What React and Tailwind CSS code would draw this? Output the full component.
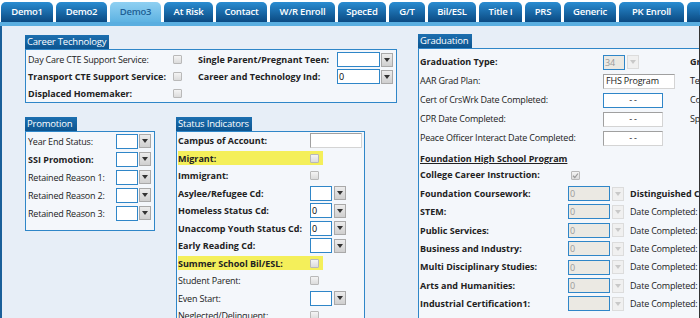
import React from 'react';

const B = 'font-bold tracking-normal';

const tabs = [
    { name: 'Demo1', w: 'w-[52px]' },
    { name: 'Demo2', w: 'w-[51px]' },
    { name: 'Demo3', w: 'w-[51px]', active: true },
    { name: 'At Risk', w: 'w-[49px]' },
    { name: 'Contact', w: 'w-[51px]' },
    { name: 'W/R Enroll', w: 'w-[65px]' },
    { name: 'SpecEd', w: 'w-[48px]' },
    { name: 'G/T', w: 'w-[36px]' },
    { name: 'Bil/ESL', w: 'w-[48px]' },
    { name: 'Title I', w: 'w-[43px]' },
    { name: 'PRS', w: 'w-[36px]' },
    { name: 'Generic', w: 'w-[52px]' },
    { name: 'PK Enroll', w: 'w-[65px]' },
    { name: 'ELL', w: 'w-[40px]' },
];

const Checkbox = ({ checked }) => (
    <div className="flex h-[9px] w-[9px] shrink-0 items-center justify-center rounded-[1px] border border-[#b9b9b9] bg-gradient-to-b from-[#f4f4f4] to-[#dcdcdc]">
        {checked && (
            <svg width="7" height="7" viewBox="0 0 7 7">
                <path d="M1 3.8 L2.8 5.5 L6 1.5" stroke="#9a9a9a" strokeWidth="1.2" fill="none" />
            </svg>
        )}
    </div>
);

const Arrow = ({ disabled }) => (
    <div className={`flex h-[14px] w-[12px] shrink-0 items-center justify-center border ${disabled ? 'border-[#dcdcdc] bg-[#f0f0f0]' : 'border-[#a9a9a9] bg-gradient-to-b from-[#ececec] to-[#cfcfcf]'}`}>
        <svg width="6" height="4" viewBox="0 0 6 4">
            <path d="M0 0 L6 0 L3 4 Z" fill={disabled ? '#c8c8c8' : '#333'} />
        </svg>
    </div>
);

// combobox: text box + arrow
const Select = ({ box = 'w-[22px]', value = '', disabled, gap = 'gap-[1px]' }) => (
    <div className={`flex shrink-0 items-center ${gap}`}>
        <div className={`flex h-[15px] ${box} items-center border border-[#2f86c8] pl-[1px] text-[9px] leading-none ${disabled ? 'bg-[#ebe9e3] text-[#9a9a9a]' : 'bg-white text-black'}`}>
            {value}
        </div>
        <Arrow disabled={disabled} />
    </div>
);

const DateBox = ({ focus }) => (
    <div className={`flex h-[15px] w-[60px] items-center justify-center border bg-white text-[9px] ${focus ? 'border-[#2f86c8]' : 'border-[#a0a0a0] border-r-[#d4d4d4] border-b-[#d4d4d4]'}`}>
        - -
    </div>
);

const Legend = ({ title, w }) => (
    <div className={`flex h-[14px] ${w} items-center whitespace-nowrap bg-gradient-to-b from-[#1c6fb0] to-[#0d5590] pl-[2px] text-[9.5px] leading-none tracking-[-0.2px] text-white`}>
        {title}
    </div>
);

const Row = ({ h, label, bold, labelW, children, hl }) => (
    <div className={`flex ${h} items-center`}>
        <div className={`flex h-[14px] items-center ${hl ? 'bg-[#f4ef5a]' : ''}`}>
            <div className={`${labelW} shrink-0 whitespace-nowrap leading-none ${bold ? B : ''}`}>{label}</div>
            {children}
            {hl && <div className="w-[4px]" />}
        </div>
    </div>
);

const CareerTechnology = () => (
    <div>
        <Legend title="Career Technology" w="w-[84px]" />
        <div className="h-[54px] w-[372px] border border-[#2f86c8] bg-[#f4f7fb] pl-[2px] pt-[1px]">
            <div className="flex h-[17px] items-center">
                <div className="w-[145px] shrink-0 whitespace-nowrap">Day Care CTE Support Service:</div>
                <Checkbox />
                <div className={`ml-[16px] w-[139px] shrink-0 whitespace-nowrap ${B}`}>Single Parent/Pregnant Teen:</div>
                <Select box="w-[43px]" />
            </div>
            <div className="flex h-[17px] items-center">
                <div className={`w-[145px] shrink-0 whitespace-nowrap ${B}`}>Transport CTE Support Service:</div>
                <Checkbox />
                <div className={`ml-[16px] w-[139px] shrink-0 whitespace-nowrap ${B}`}>Career and Technology Ind:</div>
                <Select box="w-[43px]" value="0" />
            </div>
            <div className="flex h-[17px] items-center">
                <div className={`w-[145px] shrink-0 whitespace-nowrap ${B}`}>Displaced Homemaker:</div>
                <Checkbox />
            </div>
        </div>
    </div>
);

const Promotion = () => {
    const rows = [
        { label: 'Year End Status:' },
        { label: 'SSI Promotion:', bold: true },
        { label: 'Retained Reason 1:' },
        { label: 'Retained Reason 2:' },
        { label: 'Retained Reason 3:' },
    ];
    return (
        <div>
            <Legend title="Promotion" w="w-[52px]" />
            <div className="h-[100px] w-[130px] border border-[#2f86c8] bg-[#f4f7fb] pl-[2px]">
                {rows.map((r) => (
                    <Row key={r.label} h="h-[18px]" label={r.label} bold={r.bold} labelW="w-[88px]">
                        <Select />
                    </Row>
                ))}
            </div>
        </div>
    );
};

const StatusIndicators = () => {
    const rows = [
        { label: 'Campus of Account:', bold: true, ctl: 'text' },
        { label: 'Migrant:', bold: true, ctl: 'check', hl: true },
        { label: 'Immigrant:', bold: true, ctl: 'check' },
        { label: 'Asylee/Refugee Cd:', bold: true, ctl: 'select' },
        { label: 'Homeless Status Cd:', bold: true, ctl: 'select', value: '0' },
        { label: 'Unaccomp Youth Status Cd:', bold: true, ctl: 'select', value: '0' },
        { label: 'Early Reading Cd:', bold: true, ctl: 'select' },
        { label: 'Summer School Bil/ESL:', bold: true, ctl: 'check', hl: true },
        { label: 'Student Parent:', ctl: 'check' },
        { label: 'Even Start:', ctl: 'select' },
        { label: 'Neglected/Delinquent:', ctl: 'check' },
    ];
    return (
        <div>
            <Legend title="Status Indicators" w="w-[76px]" />
            <div className="h-[200px] w-[189px] border border-[#2f86c8] bg-[#f4f7fb] pl-[1px]">
                {rows.map((r) => (
                    <Row key={r.label} h="h-[17.5px]" label={r.label} bold={r.bold} labelW="w-[132px]" hl={r.hl}>
                        {r.ctl === 'text' && <div className="h-[15px] w-[52px] border border-[#a0a0a0] border-r-[#d4d4d4] border-b-[#d4d4d4] bg-white" />}
                        {r.ctl === 'check' && <Checkbox />}
                        {r.ctl === 'select' && <Select value={r.value} gap="gap-[2px]" />}
                    </Row>
                ))}
            </div>
        </div>
    );
};

const Graduation = () => {
    const top = [
        { label: 'Graduation Type:', bold: true, side: 'Grad Type Code', sideBold: true },
        { label: 'AAR Grad Plan:', side: 'Testing' },
        { label: 'Cert of CrsWrk Date Completed:', side: 'Code' },
        { label: 'CPR Date Completed:', side: 'Speech' },
        { label: 'Peace Officer Interact Date Completed:' },
    ];
    const fhsp = [
        { label: 'Foundation Coursework:', value: '0', side: 'Distinguished Completed', sideBold: true },
        { label: 'STEM:', value: '0', side: 'Date Completed:' },
        { label: 'Public Services:', value: '0', side: 'Date Completed:' },
        { label: 'Business and Industry:', value: '0', side: 'Date Completed:' },
        { label: 'Multi Disciplinary Studies:', value: '0', side: 'Date Completed:' },
        { label: 'Arts and Humanities:', value: '0', side: 'Date Completed:' },
        { label: 'Industrial Certification1:', value: '', side: 'Date Completed:' },
    ];
    return (
        <div className="mt-[-1px]">
            <Legend title="Graduation" w="w-[54px]" />
            <div className="h-[300px] w-[400px] border border-[#2f86c8] bg-[#f4f7fb] pl-[1px] pt-[3.5px]">
                {top.map((r, i) => (
                    <div key={r.label} className="flex h-[19px] items-center">
                        <div className={`w-[183px] shrink-0 whitespace-nowrap ${r.bold ? B : ''}`}>{r.label}</div>
                        <div className="w-[87px] shrink-0">
                            {i === 0 && <Select box="w-[22px]" value="34" disabled gap="gap-[2px]" />}
                            {i === 1 && (
                                <div className="flex h-[15px] w-[72px] items-center border border-[#a0a0a0] border-r-[#d4d4d4] border-b-[#d4d4d4] bg-white pl-[2px]">FHS Program</div>
                            )}
                            {i > 1 && <DateBox focus={i === 2} />}
                        </div>
                        <div className={`whitespace-nowrap ${r.sideBold ? B : ''}`}>{r.side}</div>
                    </div>
                ))}
                <div className="flex h-[18.5px] items-center pt-[4px]">
                    <span className={`${B} underline`}>Foundation High School Program</span>
                </div>
                <div className="flex h-[18.4px] items-center">
                    <div className={`w-[151px] shrink-0 whitespace-nowrap ${B}`}>College Career Instruction:</div>
                    <Checkbox checked />
                </div>
                {fhsp.map((r) => (
                    <div key={r.label} className="flex h-[18.4px] items-center">
                        <div className={`w-[148px] shrink-0 whitespace-nowrap ${B}`}>{r.label}</div>
                        <Select box="w-[42px]" value={r.value} disabled gap="gap-[2px]" />
                        <div className={`ml-[6px] whitespace-nowrap ${r.sideBold ? B : ''}`}>{r.side}</div>
                    </div>
                ))}
            </div>
        </div>
    );
};

export default function App() {
    return (
        <div className="h-[318px] w-[700px] overflow-hidden bg-white font-['Open_Sans',sans-serif] text-[9px] tracking-[-0.2px] text-[#222]">
            <div className="flex h-[22px] items-end gap-[3px] pl-[1px]">
                {tabs.map((t) => (
                    <div
                        key={t.name}
                        className={`flex h-[20px] ${t.w} shrink-0 items-center justify-center whitespace-nowrap rounded-t-[5px] text-[9.5px] font-semibold ${t.active ? 'bg-gradient-to-b from-[#8fd0f2] to-[#5db2e2] text-[#1d5f95]' : 'bg-gradient-to-b from-[#2a8dd2] to-[#0b4a82] text-white'}`}
                    >
                        {t.name}
                    </div>
                ))}
            </div>
            <div className="h-[4px] bg-[#5aaee0]" />
            <div className="flex h-[292px] items-start overflow-hidden border-l-2 border-r border-l-[#1a5f9a] border-r-[#333] bg-[#e7eef7] pt-[9px]">
                <div className="ml-[23px] w-[372px] shrink-0">
                    <CareerTechnology />
                    <div className="mt-[14px] flex gap-[21px]">
                        <Promotion />
                        <StatusIndicators />
                    </div>
                </div>
                <div className="ml-[21px] shrink-0">
                    <Graduation />
                </div>
            </div>
        </div>
    );
}
